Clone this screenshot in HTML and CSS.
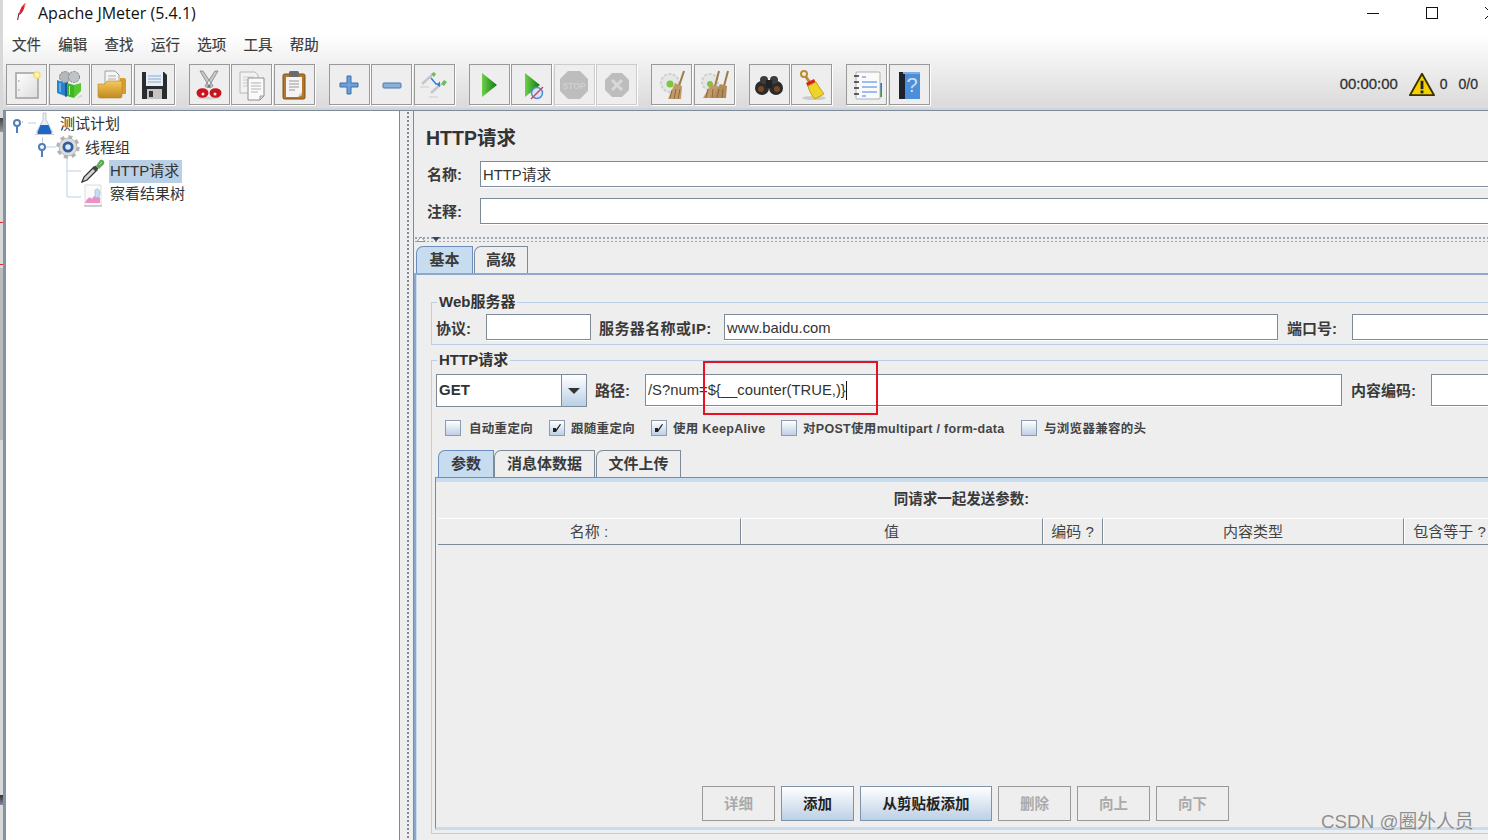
FILE: index.html
```html
<!DOCTYPE html>
<html lang="zh">
<head>
<meta charset="utf-8">
<title>Apache JMeter (5.4.1)</title>
<link rel="stylesheet" href="styles.css">
</head>
<body>
<div class="edge"></div>
<div class="app">
  <div class="chrome">
    <header class="titlebar">
      <svg class="feather" viewBox="0 0 12 20" width="12" height="20"><path d="M9.500 1C6 3 4 7 2.600 13c1.600-.4 3.200-1.600 4.400-4C8.200 6.500 9.200 3.500 9.500 1z" fill="#d8203c"/><path d="M9.500 1C8.600 2.400 8 3.600 7.500 5l1.200-.5c.4-1.200.7-2.300.8-3.500z" fill="#f0962a"/><path d="M3 11l-1.400 7" stroke="#5a1a2a" stroke-width="1" fill="none"/></svg>
      <span class="apptitle">Apache JMeter (5.4.1)</span>
      <div class="winctl">
        <span class="wmin"></span>
        <span class="wmax"></span>
        <svg class="wclose" viewBox="0 0 12 12" width="12" height="12"><path d="M0 0l12 12M12 0L0 12" stroke="#111" stroke-width="1" fill="none"/></svg>
      </div>
    </header>
    <nav class="menubar">
      <span class="menu">文件</span><span class="menu">编辑</span><span class="menu">查找</span><span class="menu">运行</span><span class="menu">选项</span><span class="menu">工具</span><span class="menu">帮助</span>
    </nav>
    <div class="toolbar">
      <div class="tgroup">
        <button class="tb"><svg viewBox="0 0 32 32" width="32" height="32"><defs><linearGradient id="pg" x1="0" y1="0" x2="1" y2="1"><stop offset="0" stop-color="#fff"/><stop offset="1" stop-color="#dcdcdc"/></linearGradient></defs><rect x="5" y="4" width="22" height="25" fill="url(#pg)" stroke="#a0a0a0" stroke-width="1.500"/><circle cx="7.800" cy="12" r=".8" fill="#999"/><circle cx="7.800" cy="21" r=".8" fill="#999"/><circle cx="26" cy="6" r="3" fill="#fff6b0" stroke="#f2e070" stroke-width="1.500"/></svg></button>
        <button class="tb"><svg viewBox="0 0 32 32" width="32" height="32"><circle cx="12" cy="8" r="5.500" fill="#b4b8bc" stroke="#85898d" stroke-dasharray="2.500 1"/><circle cx="21" cy="8" r="5.500" fill="#c0c4c8" stroke="#85898d" stroke-dasharray="2.500 1"/><path d="M4 11l8 3v13l-8-3z" fill="#2b82cc"/><path d="M7 14v9" stroke="#a8d4f4"/><path d="M12 14l3-1v14l-3 1z" fill="#175a96"/><path d="M14 14l7 2v13l-7-2z" fill="#3fb62a"/><path d="M16.500 17v9" stroke="#b8ecb0"/><path d="M21 16l7-2v8l-7 7z" fill="#58c832"/><path d="M28 26l2 1-7 3z" fill="#ccc"/></svg></button>
        <button class="tb"><svg viewBox="0 0 32 32" width="32" height="32"><defs><linearGradient id="fo" x1="0" y1="0" x2="0" y2="1"><stop offset="0" stop-color="#f6c85a"/><stop offset="1" stop-color="#c08a20"/></linearGradient></defs><path d="M9 2h10l4 4v12H9z" fill="#f6f6f6" stroke="#a0a0a0"/><path d="M12 7h8M12 10h8M12 13h8" stroke="#aaa"/><path d="M24 9h4a2 2 0 0 1 2 2v14h-6z" fill="#d89c2c"/><path d="M2 15h7l2-3h15v15a2 2 0 0 1-2 2H4a2 2 0 0 1-2-2z" fill="url(#fo)" stroke="#b98322" stroke-width=".6"/></svg></button>
        <button class="tb"><svg viewBox="0 0 32 32" width="32" height="32"><path d="M4 3h22l3 3v24H4z" fill="#2a2c30"/><rect x="8" y="3" width="17" height="14" fill="#e8eef6"/><path d="M10 7h13M10 10h13M10 13h13" stroke="#8ca6c8"/><rect x="9" y="20" width="15" height="10" fill="#c4c4c4"/><rect x="11" y="22" width="4" height="6" fill="#333"/></svg></button>
      </div>
      <div class="tgroup">
        <button class="tb"><svg viewBox="0 0 32 32" width="32" height="32"><ellipse cx="16" cy="29" rx="12" ry="1.500" fill="#d4d4d4"/><path d="M7 2l10 17 3-2L10 2zM25 2L15 19l-3-2L22 2z" fill="#c6cacc" stroke="#7e8284" stroke-width=".8"/><circle cx="16" cy="17" r="1.500" fill="#777"/><ellipse cx="9.500" cy="24" rx="6" ry="4.800" fill="#c8141c"/><ellipse cx="22.500" cy="24" rx="6" ry="4.800" fill="#c8141c"/><circle cx="10" cy="25" r="1.500" fill="#eee"/><circle cx="22" cy="25" r="1.500" fill="#eee"/></svg></button>
        <button class="tb" ><svg viewBox="0 0 32 32" width="32" height="32"><path d="M4 3h15l3 3v18H4z" fill="#f2f2f2" stroke="#b8b8b8"/><path d="M7 8h11M7 11h11M7 14h11M7 17h11" stroke="#ccc"/><path d="M12 9h16v18l-4 4H12z" fill="#fafafa" stroke="#8e8e8e"/><path d="M15 14h10M15 17h10M15 20h10M15 23h7" stroke="#b4b4b4"/><path d="M24 31v-4h4z" fill="#ddd" stroke="#9a9a9a"/></svg></button>
        <button class="tb"><svg viewBox="0 0 32 32" width="32" height="32"><rect x="5" y="5" width="22" height="25" rx="1.500" fill="#b3772a" stroke="#7e5016"/><path d="M8 8h16v18l-4 2H8z" fill="#f4f4f4"/><rect x="11" y="2" width="10" height="6" rx="1.500" fill="#6a6a6a"/><path d="M11 12h10M11 15h10M11 18h10M11 21h6" stroke="#999"/><path d="M19 28l5-5v3z" fill="#ccc"/></svg></button>
      </div>
      <div class="tgroup">
        <button class="tb"><svg viewBox="0 0 32 32" width="32" height="32"><path d="M14 7h4v7h7v4h-7v7h-4v-7H7v-4h7z" fill="#6e9fd6" stroke="#3a6ea8"/></svg></button>
        <button class="tb"><svg viewBox="0 0 32 32" width="32" height="32"><rect x="7" y="14" width="18" height="5" rx="1" fill="#8cb0dc" stroke="#4a78ae"/></svg></button>
        <button class="tb"><svg viewBox="0 0 32 32" width="32" height="32"><path d="M4 15L14 6" stroke="#c4c8cc" stroke-width="2.500"/><path d="M13 5l3-2 2 2-2 3z" fill="#6fbb5e"/><path d="M13 24L23 15" stroke="#c4c8cc" stroke-width="2.500"/><path d="M23 15l3-4 3 2-3 4z" fill="#6fbb5e"/><path d="M13 9l5 6 4 0" fill="none" stroke="#2f7fe0" stroke-width="1.500"/><path d="M22 12v6l-3-2z" fill="#2f7fe0"/><path d="M2 18h9M11 28h9" stroke="#ccc"/></svg></button>
      </div>
      <div class="tgroup">
        <button class="tb"><svg viewBox="0 0 32 32" width="32" height="32"><defs><linearGradient id="gr" x1="0" y1="0" x2="1" y2="0"><stop offset="0" stop-color="#6fd04a"/><stop offset="1" stop-color="#0a7a10"/></linearGradient></defs><path d="M9 4l15 12L9 28z" fill="url(#gr)"/></svg></button>
        <button class="tb"><svg viewBox="0 0 32 32" width="32" height="32"><path d="M9 4l15 12L9 28z" fill="url(#gr)"/><circle cx="21" cy="24" r="5.500" fill="#d6e6f8" stroke="#4f8ed8" stroke-width="1.500"/><path d="M15 30L27 18" stroke="#e0404a" stroke-width="1.500"/></svg></button>
        <button class="tb off"><svg viewBox="0 0 32 32" width="32" height="32"><path d="M10 2h12l8 8v12l-8 8H10l-8-8V10z" fill="#bdbdbd"/><text x="16" y="19.500" class="stoptxt">STOP</text></svg></button>
        <button class="tb off"><svg viewBox="0 0 32 32" width="32" height="32"><path d="M11 4h10l7 7v10l-7 7H11l-7-7V11z" fill="#bdbdbd"/><path d="M11 11l10 10M21 11L11 21" stroke="#d8d8d8" stroke-width="3"/></svg></button>
      </div>
      <div class="tgroup">
        <button class="tb"><svg viewBox="0 0 32 32" width="32" height="32"><circle cx="14" cy="14" r="9" fill="#e6e6e6" stroke="#cfcfcf" stroke-width="2" stroke-dasharray="3 1.500"/><circle cx="14" cy="15" r="3.500" fill="#7cc63c"/><path d="M28 2l-5 15" stroke="#9c7a4a" stroke-width="2"/><path d="M19 14l7 3-1 13H12z" fill="#c09a68"/><path d="M16 21l-2 8M20 20l-2 10M24 20l-2 10" stroke="#8e6a3c"/></svg></button>
        <button class="tb"><svg viewBox="0 0 32 32" width="32" height="32"><circle cx="12" cy="13" r="8" fill="#e6e6e6" stroke="#cfcfcf" stroke-width="2" stroke-dasharray="3 1.500"/><circle cx="12" cy="15" r="3" fill="#7cc63c"/><path d="M21 2l-4 15M30 2l-4 15" stroke="#9c7a4a" stroke-width="2"/><path d="M13 15l7 2 1 12H5z" fill="#c09a68"/><path d="M22 15l7 2-1 12H14z" fill="#b48c58"/><path d="M10 20l-2 9M15 20l-1 9M21 20l-2 9M25 20l-1 9" stroke="#8e6a3c"/></svg></button>
      </div>
      <div class="tgroup">
        <button class="tb"><svg viewBox="0 0 32 32" width="32" height="32"><circle cx="9" cy="19" r="7" fill="#2a2a2a"/><circle cx="23" cy="19" r="7" fill="#2a2a2a"/><circle cx="11" cy="11" r="4" fill="#3c3c3c"/><circle cx="21" cy="11" r="4" fill="#3c3c3c"/><rect x="13" y="11" width="6" height="8" fill="#222"/><circle cx="8" cy="20" r="3" fill="#7a4a1e"/><circle cx="24" cy="20" r="3" fill="#7a4a1e"/></svg></button>
        <button class="tb"><svg viewBox="0 0 32 32" width="32" height="32"><ellipse cx="18" cy="29" rx="12" ry="2" fill="#ccc"/><circle cx="8" cy="5" r="3" fill="none" stroke="#c08a2e" stroke-width="2"/><path d="M10 8l5 7" stroke="#c08a2e" stroke-width="3"/><path d="M10 14l8-4 2 4-8 4z" fill="#d8201c"/><path d="M12 17l8-4c3 5 6 9 8 12l-9 5c-3-3-6-8-7-13z" fill="#f0d22c" stroke="#c8a010"/></svg></button>
      </div>
      <div class="tgroup">
        <button class="tb"><svg viewBox="0 0 32 32" width="32" height="32"><rect x="28" y="14" width="3" height="6" fill="#2a6fd0"/><rect x="28" y="20" width="3" height="8" fill="#2f9a3a"/><rect x="5" y="3" width="24" height="27" rx="1" fill="#fafafa" stroke="#b0b0b0"/><path d="M3 7h5M3 13h5M3 19h5M3 25h5" stroke="#333" stroke-width="1.500"/><path d="M11 8h4M11 13h15M11 18h15M11 23h15M11 27h4" stroke="#3a82e0" stroke-width="1.200"/></svg></button>
        <button class="tb"><svg viewBox="0 0 32 32" width="32" height="32"><rect x="6" y="3" width="21" height="27" fill="#4d8ed8"/><rect x="6" y="3" width="6" height="27" fill="#1c2430"/><rect x="10" y="3" width="17" height="2" fill="#7aaee8"/><text x="19" y="23" class="helptxt">?</text></svg></button>
      </div>
      <div class="status">
        <span class="clock">00:00:00</span>
        <svg class="warn" viewBox="0 0 28 26" width="26" height="25"><path d="M14 1.500L27 24.500H1z" fill="#f6cf00" stroke="#3a3000" stroke-width="2" stroke-linejoin="round"/><rect x="12.500" y="9" width="3" height="9" fill="#222"/><rect x="12.500" y="19.500" width="3" height="3" fill="#222"/></svg>
        <span class="count">0</span>
        <span class="count">0/0</span>
      </div>
    </div>
  </div>

  <main class="main">
    <section class="tree">
      <svg class="treelines" width="110" height="100" viewBox="0 0 110 100"><path d="M17.500 12v-2M23 12h8M37.500 26v12M41 36h10M62 47v39M62 60h14M62 86h14" fill="none" stroke="#b8cfe5"/></svg>
      <div class="node l0">
        <svg class="twisty" viewBox="0 0 10 16" width="10" height="16"><circle cx="5" cy="5" r="3" fill="#fff" stroke="#4f7fb8" stroke-width="2"/><rect x="4" y="8" width="2" height="7" fill="#4f7fb8"/></svg>
        <svg class="nicon" viewBox="0 0 20 24" width="20" height="24"><path d="M8 2h3v7l6 11a2 2 0 0 1-2 3H4a2 2 0 0 1-2-3l6-11z" fill="#e8eef6" stroke="#b4bcc4" stroke-width=".8"/><path d="M5.500 14h8l3 7a1.500 1.500 0 0 1-1.500 2H4a1.500 1.500 0 0 1-1.500-2z" fill="#1d66c4"/><path d="M0 23.500h19" stroke="#ccc"/></svg>
        <span class="nlabel">测试计划</span>
      </div>
      <div class="node l1">
        <svg class="twisty" viewBox="0 0 10 16" width="10" height="16"><circle cx="5" cy="5" r="3" fill="#fff" stroke="#4f7fb8" stroke-width="2"/><rect x="4" y="8" width="2" height="7" fill="#4f7fb8"/></svg>
        <svg class="nicon gear" viewBox="0 0 24 24" width="24" height="24"><circle cx="12" cy="12" r="10" fill="none" stroke="#b4b4b4" stroke-width="3.500" stroke-dasharray="4 3.850"/><circle cx="12" cy="12" r="9" fill="#dcdcdc" stroke="#9a9a9a" stroke-width=".6"/><circle cx="12" cy="12" r="5.500" fill="#2d5e9e"/><circle cx="12" cy="12" r="2.800" fill="#dfe8f4"/></svg>
        <span class="nlabel">线程组</span>
      </div>
      <div class="node l2">
        <svg class="nicon" viewBox="0 0 24 24" width="24" height="24"><path d="M1 23l2-5L13 8l3 3L6 21z" fill="#d4d6d8" stroke="#333" stroke-width="1.300"/><path d="M11.500 9.500l3 3 3-3-3-3z" fill="#444"/><path d="M15 7l3 3 5-5c1-3-1-5-4-4z" fill="#5fa85a"/><path d="M18 6l3-3" stroke="#a8dca0"/></svg>
        <span class="nlabel sel">HTTP请求</span>
      </div>
      <div class="node l2">
        <svg class="nicon" viewBox="0 0 24 24" width="24" height="24"><path d="M4 2h16v21H4z" fill="#fbfbfb" stroke="#ddd"/><path d="M4 20c2-5 5-7 7-4 2-4 5-5 8-1v5H4z" fill="#ee8fc8"/><path d="M14 7c2-2 5-1 5 3s-3 6-5 4z" fill="#c4dcf4" stroke="#8eb4de" stroke-width=".6"/><path d="M3 23h18" stroke="#aaa"/></svg>
        <span class="nlabel">察看结果树</span>
      </div>
    </section>
    <div class="splitter"></div>
    <section class="panel">
      <div class="head">
        <h1 class="ptitle">HTTP请求</h1>
        <div class="frow"><label class="flabel">名称:</label><div class="field wide">HTTP请求</div></div>
        <div class="frow"><label class="flabel">注释:</label><div class="field wide"></div></div>
      </div>
      <div class="divider"><svg viewBox="0 0 26 6" width="26" height="6"><path d="M1 5.500L5 1l4 4.500z" fill="#fff" stroke="#6a7f96" stroke-width=".8"/><path d="M16 1h8l-4 4.500z" fill="#33475c"/></svg></div>
      <div class="tabs outer">
        <span class="tab on">基本</span><span class="tab t2">高级</span>
      </div>
      <div class="tabbody">
        <fieldset class="fs fs1">
          <legend class="lg">Web服务器</legend>
          <div class="srow">
            <label class="flabel l-proto">协议:</label><div class="field w-proto"></div>
            <label class="flabel l-host">服务器名称或IP:</label><div class="field w-host">www.baidu.com</div>
            <label class="flabel l-port">端口号:</label><div class="field w-port"></div>
          </div>
        </fieldset>
        <fieldset class="fs fs2">
          <legend class="lg">HTTP请求</legend>
          <div class="hrow">
            <div class="combo"><span class="cval">GET</span><span class="carrow"><svg viewBox="0 0 14 8" width="14" height="8"><path d="M1 1h12L7 7z" fill="#333"/></svg></span></div>
            <label class="flabel l-path">路径:</label>
            <div class="field w-path">/S?num=${__counter(TRUE,)}<i class="caret"></i></div>
            <label class="flabel l-enc">内容编码:</label><div class="field w-enc"></div>
          </div>
          <div class="checks">
            <span class="chk c1"><i class="box"></i>自动重定向</span>
            <span class="chk c2"><i class="box"><svg viewBox="0 0 14 14" width="14" height="14"><path d="M3 11V7h3v1.500L10 3l1 .5L6 11z" fill="#222"/></svg></i>跟随重定向</span>
            <span class="chk c3"><i class="box"><svg viewBox="0 0 14 14" width="14" height="14"><path d="M3 11V7h3v1.500L10 3l1 .5L6 11z" fill="#222"/></svg></i>使用 KeepAlive</span>
            <span class="chk c4"><i class="box"></i>对POST使用multipart / form-data</span>
            <span class="chk c5"><i class="box"></i>与浏览器兼容的头</span>
          </div>
          <div class="tabs inner">
            <span class="tab on a">参数</span><span class="tab b">消息体数据</span><span class="tab c">文件上传</span>
          </div>
          <div class="params">
            <div class="ptxt">同请求一起发送参数:</div>
            <div class="thead">
              <span class="th">名称 :</span><span class="th">值</span><span class="th">编码 ?</span><span class="th">内容类型</span><span class="th">包含等于 ?</span>
            </div>
            <div class="btns">
              <span class="btn dis">详细</span>
              <span class="btn act">添加</span>
              <span class="btn act wide2">从剪贴板添加</span>
              <span class="btn dis">删除</span>
              <span class="btn dis">向上</span>
              <span class="btn dis">向下</span>
            </div>
          </div>
        </fieldset>
      </div>
    </section>
  </main>
</div>
<div class="redbox"></div>
<div class="mark">CSDN @圈外人员</div>
</body>
</html>
```
FILE: styles.css
```css
* { box-sizing: border-box; }
html, body { margin: 0; height: 100%; }
body {
  width: 1488px; height: 840px; overflow: hidden; position: relative;
  display: flex; background: #fff; color: #333;
  font-family: "Liberation Sans", "Noto Sans CJK SC", sans-serif; font-size: 14px;
}
.edge {
  width: 3px; flex: none; background-color: #d8d8d8;
  background-image:
    linear-gradient(#e02a2a, #e02a2a), linear-gradient(#e02a2a, #e02a2a),
    linear-gradient(#444, #999), linear-gradient(#bbb, #bbb), linear-gradient(#333, #88a);
  background-size: 3px 1px, 3px 1px, 3px 14px, 3px 172px, 3px 10px;
  background-position: 0 222px, 0 264px, 0 118px, 0 268px, 0 795px;
  background-repeat: no-repeat;
}
.app { width: 1485px; flex: none; display: flex; flex-direction: column; height: 840px; }

.chrome { flex: none; height: 110px; border-bottom: 2px solid #d0d4d8; background: linear-gradient(#fff 0, #fff 34px, #dcdcdc 104px); }
.titlebar { height: 28px; display: flex; align-items: center; position: relative; }
.feather { margin-left: 13px; margin-top: -4px; }
.apptitle { margin-left: 10px; margin-top: -2px; font: 16px "Open Sans", "Noto Sans", sans-serif; color: #111; }
.winctl { margin-left: auto; display: flex; align-items: center; height: 28px; overflow: hidden; margin-top: -2px; }
.wmin { width: 12px; height: 1px; background: #111; margin-right: 47px; }
.wmax { width: 12px; height: 12px; border: 1px solid #111; margin-right: 47px; }
.wclose { margin-right: -9px; }
.menubar { height: 30px; display: flex; align-items: center; padding-left: 9px; }
.menu { font-size: 14.500px; width: 46.300px; color: #3a3a3a; -webkit-text-stroke: .2px #3a3a3a; }
.toolbar { display: flex; gap: 14px; padding: 6px 0 0 3px; align-items: flex-start; }
.tgroup { display: flex; gap: 1.500px; }
.tb {
  width: 41px; height: 41px; padding: 0; background: #eee; border: 1px solid #999;
  box-shadow: 1px 1px 0 #fff; display: flex; align-items: center; justify-content: center;
}
.tb.off { border-color: #ccc; }
.stoptxt { font: bold 8.500px "Liberation Sans", sans-serif; fill: #d0d0d0; text-anchor: middle; }
.helptxt { font: 20px "Liberation Sans", sans-serif; fill: #cfe0f6; text-anchor: middle; }
.status { margin-left: auto; display: flex; align-items: center; height: 40px; padding-right: 10px; }
.clock { font-size: 14.900px; color: #333; -webkit-text-stroke: .3px #333; margin-right: 11px; }
.count { font-size: 14px; color: #333; -webkit-text-stroke: .3px #333; margin-left: 5px; }
.count + .count { margin-left: 11px; }

.main { flex: 1; display: flex; min-height: 0; border-top: 1px solid #7d8b99; }
.tree { width: 397px; flex: none; background: #fff; position: relative; border-right: 1px solid #7d8b99; border-left: 3px solid #8493a2; }
.treelines { position: absolute; left: -1px; top: 0; }
.node { height: 24px; display: flex; align-items: center; position: relative; }
.node:nth-child(5) { height: 23px; }
.l0 { padding-left: 6px; }
.l1 { padding-left: 31px; }
.l2 { padding-left: 75px; }
.twisty { flex: none; margin-top: 5px; }
.nicon { flex: none; }
.l0 .nicon { margin-left: 13px; }
.l1 .nicon { margin-left: 9px; }
.nlabel { font-family: "Noto Sans CJK SC", sans-serif; font-size: 15px; color: #333; }
.l0 .nlabel { margin: -2px 0 0 5px; }
.l1 .nlabel { margin: -2px 0 0 5px; }
.l2 .nlabel { margin-left: 4px; padding: 0 1px 1px; line-height: 22px; font-family: "Liberation Sans", "Noto Sans CJK SC", sans-serif; }
.sel { background: #b8cfe5; width: 73px; }
.splitter {
  width: 14px; flex: none; background-color: #eee;
  background-image: radial-gradient(circle, #7d8b99 1px, transparent 1.200px);
  background-size: 4px 4px; background-position: 6px 0; background-repeat: repeat-y;
  border-right: 1px solid #7d8b99;
}
.panel { flex: 1; min-width: 0; background: #eee; display: flex; flex-direction: column; overflow: hidden; }
.head { padding-left: 12px; flex: none; }
.ptitle { margin: 15px 0 11px; font-size: 19.500px; line-height: 24px; font-weight: bold; color: #333; }
.frow { display: flex; height: 26px; margin-bottom: 11px; align-items: center; }
.flabel { flex: none; font-weight: bold; font-size: 15px; color: #3a3a3a; white-space: nowrap; margin-top: -2px; }
.head .flabel { width: 54px; padding-left: 1px; }
.field {
  height: 100%; background: #fff; border: 1px solid #7d8b99; box-shadow: 0 1px 0 #fff;
  padding-left: 2px; font-size: 14.800px; color: #333; display: flex; align-items: center; flex: none; white-space: nowrap;
}
.wide { width: 1040px; padding-bottom: 2px; }
.divider { height: 7px; flex: none; margin-bottom: 4px; padding-left: 2px; display: flex; align-items: center;
  background-image: radial-gradient(circle, #9aa6b2 .8px, transparent 1px); background-size: 4px 4px; background-position: 0 1px; }
.tabs { display: flex; flex: none; height: 27px; align-items: flex-end; }
.outer { padding-left: 2px; }
.tab {
  height: 27px; display: flex; align-items: center; justify-content: center; font-weight: bold; font-size: 15px; padding-bottom: 3px;
  color: #3a3a3a; background: #eee; border: 1px solid #7d8b99; border-bottom: 0; border-top-left-radius: 7px;
}
.tab.on { background: #c8dcf0; border-color: #6c8ebf; }
.outer .on { width: 57px; }
.t2 { width: 54px; margin-left: 1px; }
.tabbody {
  flex: 1; min-height: 0; width: 1090px; border-top: 2px solid #8ea8cc; border-left: 2px solid #8ea8cc; box-shadow: inset 1px 0 0 #c8dcf0;
  padding: 17px 0 6px 15px; display: flex; flex-direction: column; gap: 5px;
}
.fs { margin: 0; border: 1px solid #b8cfe5; padding: 0 0 0 4px; min-width: 0; width: 1072px; }
.lg { padding: 0 2px; margin-left: 1px; font-weight: bold; font-size: 15px; line-height: 20px; color: #333; }
.fs1 { flex: none; height: 53px; }
.srow { height: 26px; margin-top: 2px; display: flex; align-items: center; }
.srow .field { height: 26px; padding-top: 1px; }
.srow .flabel { margin-top: 0; }
.w-proto { width: 105px; }
.l-proto { width: 50px; }
.l-host { margin-left: 8px; width: 125px; letter-spacing: .4px; }
.w-host { width: 554px; }
.l-port { margin-left: 9px; width: 65px; }
.w-port { width: 200px; }
.fs2 { flex: 1; min-height: 0; display: flex; flex-direction: column; }
.hrow { display: flex; height: 33px; margin-top: 4px; align-items: center; flex: none; }
.combo { width: 151px; height: 33px; display: flex; border: 1px solid #7d8b99; background: #fff; flex: none; }
.cval { flex: 1; padding-left: 2px; font-weight: bold; font-size: 15px; display: flex; align-items: center; padding-bottom: 2px; }
.carrow { width: 25px; border-left: 1px solid #7d8b99; background: linear-gradient(#fff, #b8cfe5); display: flex; align-items: center; justify-content: center; }
.l-path { margin-left: 8px; width: 50px; }
.w-path { width: 697px; height: 32px; margin-top: -1px; padding-left: 2px; }
.caret { display: block; width: 1px; height: 19px; background: #111; }
.l-enc { margin-left: 9px; width: 80px; }
.w-enc { width: 120px; height: 32px; margin-top: -1px; }
.checks { display: flex; flex: none; height: 17px; margin-top: 12px; padding-left: 9px; }
.chk { display: flex; align-items: center; font-size: 12.500px; font-weight: bold; color: #444; flex: none; white-space: nowrap; letter-spacing: .3px; }
.box { width: 16px; height: 16px; border: 1px solid #8c9cae; background: linear-gradient(#fff, #bcd0e6); display: flex; align-items: center; justify-content: center; margin-right: 8px; flex: none; }
.c1 { width: 104px; }
.c2 { width: 102px; }
.c3 { width: 130px; }
.c4 { width: 240px; }
.c2 .box, .c3 .box { margin-right: 6px; }
.c4 .box { margin-right: 6px; }
.c5 .box { margin-right: 7px; }
.inner { margin-top: 14px; padding-left: 2px; }
.inner .a { width: 56px; }
.inner .b { width: 101px; }
.inner .c { width: 85px; margin-left: 1px; }
.params {
  flex: 1; min-height: 0; margin-left: -1px; margin-bottom: 3px; width: 1060px; display: flex; flex-direction: column;
  border-left: 1px solid #7d8b99; border-top: 1px solid #6c8ebf; box-shadow: inset 0 4px 0 #c8dcf0; border-bottom: 3px solid #c8dcf0; padding: 0 1px;
}
.ptxt { text-align: center; font-weight: bold; font-size: 14.500px; margin-top: 11px; height: 20px; line-height: 20px; padding-right: 8px; color: #3a3a3a; }
.thead { display: grid; grid-template-columns: 303px 302px 60px 301px 92px; height: 27px; margin-top: 9px; margin-left: 1px; flex: none; }
.th { display: flex; align-items: center; justify-content: center; font-size: 15px; color: #444; border-top: 1px solid #fff; border-right: 1px solid #7d8b99; border-bottom: 1px solid #7d8b99; box-shadow: 1px 0 0 #fff; padding-bottom: 2px; white-space: pre; }
.btns { margin-top: auto; margin-bottom: 6px; display: flex; gap: 6px; justify-content: center; flex: none; }
.btn { width: 73px; height: 35px; display: flex; align-items: center; justify-content: center; font-weight: bold; font-size: 14.500px; border: 1px solid #999; flex: none; padding-bottom: 2px; }
.dis { color: #aaa; background: #eee; }
.act { color: #222; background: linear-gradient(#fff, #bcd0e6); border-color: #7d93aa; }
.wide2 { width: 132px; }
.redbox { position: absolute; left: 703px; top: 361px; width: 175px; height: 54px; border: 2px solid #e81123; }
.mark { position: absolute; left: 1321px; top: 806px; font: 18.800px "Liberation Sans", "Noto Sans CJK SC", sans-serif; color: rgba(110, 110, 110, .75); }
```
